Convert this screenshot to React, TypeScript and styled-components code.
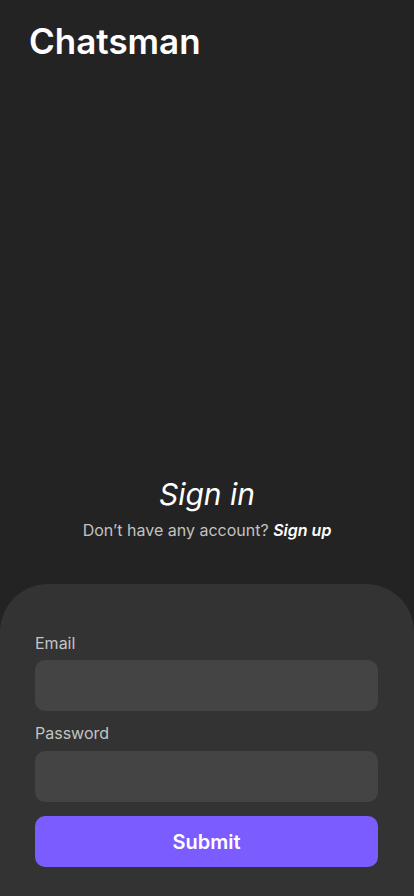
import React from "react";
import styled, { createGlobalStyle } from "styled-components";

const Global = createGlobalStyle`
  html, body { margin: 0; padding: 0; background: #232323; }
  body { font-family: Inter, "Noto Sans", "Liberation Sans", sans-serif; -webkit-font-smoothing: antialiased; }
  * { box-sizing: border-box; }
`;

const Page = styled.div`
  min-height: 100vh;
  display: flex;
  flex-direction: column;
  background: #232323;
  color: #fff;
`;

const Header = styled.header`
  padding: 20px 29px 0;
`;

const Logo = styled.h1`
  margin: 0;
  font-size: 35px;
  line-height: 42px;
  font-weight: 600;
  letter-spacing: 0;
  color: #fff;
`;

const Spacer = styled.div`
  flex: 1;
`;

const Intro = styled.section`
  display: flex;
  flex-direction: column;
  align-items: center;
  padding-bottom: 44px;
`;

const Title = styled.h2`
  margin: 0;
  font-size: 30px;
  line-height: 36px;
  font-weight: 400;
  font-style: italic;
  color: #fff;
`;

const Sub = styled.p`
  margin: 8px 0 0;
  font-size: 16px;
  line-height: 20px;
  color: #c2c2c2;
`;

const SubLink = styled.a`
  color: #fff;
  font-style: italic;
  font-weight: 600;
  text-decoration: none;
`;

const Panel = styled.form`
  background: #333333;
  border-radius: 48px 48px 0 0;
  padding: 49px 36px 29px 35px;
  display: flex;
  flex-direction: column;
`;

const Label = styled.label<{ $first?: boolean }>`
  font-size: 16px;
  line-height: 20px;
  color: #c4c4c4;
  margin-top: ${(p) => (p.$first ? "0" : "12px")};
  margin-bottom: ${(p) => (p.$first ? "7px" : "8px")};
`;

const Input = styled.input`
  height: 51px;
  width: 100%;
  border: none;
  outline: none;
  border-radius: 10px;
  background: #444444;
  color: #fff;
  font: inherit;
  padding: 0 14px;
`;

const Button = styled.button`
  margin-top: 14px;
  height: 51px;
  width: 100%;
  border: none;
  border-radius: 10px;
  background: #7b5cff;
  color: #fff;
  font-family: inherit;
  font-size: 20px;
  font-weight: 600;
  cursor: pointer;
`;

export default function App() {
  return (
    <Page>
      <Global />
      <Header>
        <Logo>Chatsman</Logo>
      </Header>
      <Spacer />
      <Intro>
        <Title>Sign in</Title>
        <Sub>
          Don’t have any account? <SubLink href="#">Sign up</SubLink>
        </Sub>
      </Intro>
      <Panel onSubmit={(e) => e.preventDefault()}>
        <Label $first htmlFor="email">Email</Label>
        <Input id="email" type="email" />
        <Label htmlFor="password">Password</Label>
        <Input id="password" type="password" />
        <Button type="submit">Submit</Button>
      </Panel>
    </Page>
  );
}
